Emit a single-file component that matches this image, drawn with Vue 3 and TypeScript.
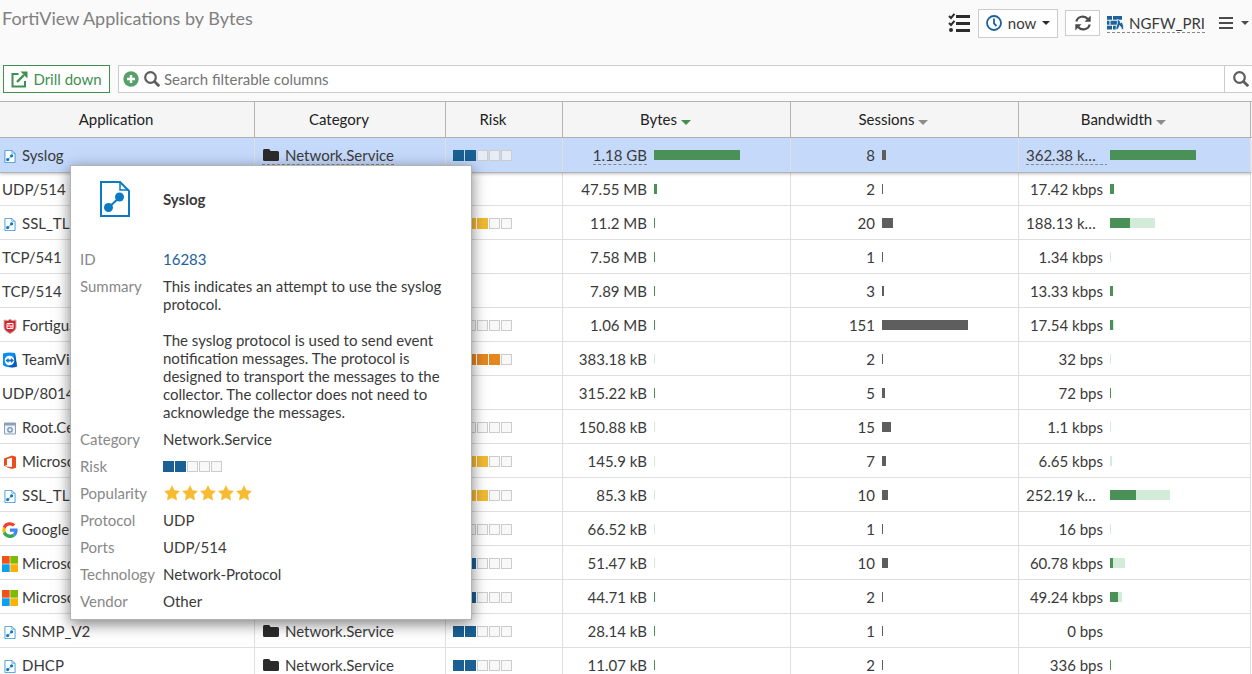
<script setup lang="ts">
import { ref } from 'vue'

type Bar = [strong: number, faint: number]

interface Row {
  icon?: string
  app: string
  category?: string
  risk?: number
  bytes: string
  bytesBar: Bar
  sessions: number
  sessionsBar: number
  bandwidth: string
  bandwidthBar: Bar
}

const rows: Row[] = [
  { icon: 'doc', app: 'Syslog', category: 'Network.Service', risk: 2, bytes: '1.18 GB', bytesBar: [86, 0], sessions: 8, sessionsBar: 4, bandwidth: '362.38 kbps', bandwidthBar: [86, 0] },
  { app: 'UDP/514', bytes: '47.55 MB', bytesBar: [3, 0], sessions: 2, sessionsBar: 1, bandwidth: '17.42 kbps', bandwidthBar: [4, 0] },
  { icon: 'doc', app: 'SSL_TLS', risk: 3, bytes: '11.2 MB', bytesBar: [1, 0], sessions: 20, sessionsBar: 11, bandwidth: '188.13 kbps', bandwidthBar: [20, 25] },
  { app: 'TCP/541', bytes: '7.58 MB', bytesBar: [1, 0], sessions: 1, sessionsBar: 1, bandwidth: '1.34 kbps', bandwidthBar: [0, 1] },
  { app: 'TCP/514', bytes: '7.89 MB', bytesBar: [1, 0], sessions: 3, sessionsBar: 2, bandwidth: '13.33 kbps', bandwidthBar: [3, 0] },
  { icon: 'shield', app: 'Fortiguard', risk: 1, bytes: '1.06 MB', bytesBar: [1, 0], sessions: 151, sessionsBar: 86, bandwidth: '17.54 kbps', bandwidthBar: [3, 1] },
  { icon: 'teamviewer', app: 'TeamViewer', risk: 4, bytes: '383.18 kB', bytesBar: [0, 1], sessions: 2, sessionsBar: 1, bandwidth: '32 bps', bandwidthBar: [0, 1] },
  { app: 'UDP/8014', bytes: '315.22 kB', bytesBar: [1, 0], sessions: 5, sessionsBar: 3, bandwidth: '72 bps', bandwidthBar: [1, 0] },
  { icon: 'window', app: 'Root.Cert', risk: 1, bytes: '150.88 kB', bytesBar: [0, 1], sessions: 15, sessionsBar: 9, bandwidth: '1.1 kbps', bandwidthBar: [0, 1] },
  { icon: 'office', app: 'Microsoft', risk: 3, bytes: '145.9 kB', bytesBar: [0, 1], sessions: 7, sessionsBar: 4, bandwidth: '6.65 kbps', bandwidthBar: [0, 2] },
  { icon: 'doc', app: 'SSL_TLS', risk: 3, bytes: '85.3 kB', bytesBar: [0, 1], sessions: 10, sessionsBar: 6, bandwidth: '252.19 kbps', bandwidthBar: [26, 34] },
  { icon: 'google', app: 'Google', risk: 1, bytes: '66.52 kB', bytesBar: [0, 1], sessions: 1, sessionsBar: 1, bandwidth: '16 bps', bandwidthBar: [0, 1] },
  { icon: 'microsoft', app: 'Microsoft', risk: 2, bytes: '51.47 kB', bytesBar: [0, 1], sessions: 10, sessionsBar: 6, bandwidth: '60.78 kbps', bandwidthBar: [3, 12] },
  { icon: 'microsoft', app: 'Microsoft', risk: 2, bytes: '44.71 kB', bytesBar: [1, 0], sessions: 2, sessionsBar: 1, bandwidth: '49.24 kbps', bandwidthBar: [8, 4] },
  { icon: 'doc', app: 'SNMP_V2', category: 'Network.Service', risk: 2, bytes: '28.14 kB', bytesBar: [1, 0], sessions: 1, sessionsBar: 1, bandwidth: '0 bps', bandwidthBar: [0, 0] },
  { icon: 'doc', app: 'DHCP', category: 'Network.Service', risk: 2, bytes: '11.07 kB', bytesBar: [1, 0], sessions: 2, sessionsBar: 1, bandwidth: '336 bps', bandwidthBar: [1, 0] },
]

const columns = [
  { key: 'app', label: 'Application', arrow: '' },
  { key: 'cat', label: 'Category', arrow: '' },
  { key: 'risk', label: 'Risk', arrow: '' },
  { key: 'num', label: 'Bytes', arrow: 'active' },
  { key: 'num', label: 'Sessions', arrow: 'idle' },
  { key: 'last', label: 'Bandwidth', arrow: 'idle' },
]

const details = [
  { label: 'Protocol', value: 'UDP' },
  { label: 'Ports', value: 'UDP/514' },
  { label: 'Technology', value: 'Network-Protocol' },
  { label: 'Vendor', value: 'Other' },
]

const selected = ref(0)
const search = ref('')
</script>

<template>
  <div class="page">
    <svg class="sprite" aria-hidden="true">
      <symbol id="doc" viewBox="0 0 30 36">
        <path d="M1 1H20L29 10V35H1Z" fill="#fff" stroke="#0b7ac4" stroke-width="2" />
        <path d="M20 1V9H29" fill="none" stroke="#0b7ac4" stroke-width="1.5" />
        <path d="M8 27L20 16" stroke="#0b7ac4" stroke-width="2" />
        <circle cx="8.500" cy="26.500" r="4.500" fill="#0b7ac4" />
        <circle cx="19.500" cy="16" r="4.500" fill="#0b7ac4" />
      </symbol>
      <symbol id="shield" viewBox="0 0 16 16">
        <path d="M8 1L10 2.500L14 2V9C14 12 11 14 8 15.500C5 14 2 12 2 9V2L6 2.500Z" fill="#d9252e" stroke="#b8b8bb" stroke-width="1" />
        <path d="M5 5.500H11V10.500H5Z" fill="none" stroke="#fff" stroke-width="1" />
        <path d="M5 8H11M7 5.500V7M9 8V10" stroke="#fff" stroke-width="1" />
      </symbol>
      <symbol id="teamviewer" viewBox="0 0 16 16">
        <path d="M1 1.500Q7 0 13 1L15 14.500Q9 16 3 14.500L1 13Z" fill="#0b8cf0" />
        <path d="M13 1L15 14.500Q12 16 6 15Q12 12 13 1Z" fill="#0b5bb8" />
        <circle cx="7.500" cy="8.500" r="4.800" fill="#fff" />
        <path d="M3.500 8.500L6.500 6V7.500H9V6L12 8.500L9 11V9.500H6.500V11Z" fill="#0b78d8" />
      </symbol>
      <symbol id="window" viewBox="0 0 16 16">
        <path d="M2.500 3H13.500V14H2.500Z" fill="#edf2f8" stroke="#8ca0bb" stroke-width="1" />
        <path d="M2 3H14V5.500H2Z" fill="#8ca0bb" />
        <circle cx="8" cy="9.800" r="2.200" fill="none" stroke="#7b93b5" stroke-width="1.400" />
      </symbol>
      <symbol id="office" viewBox="0 0 16 16">
        <path d="M2 4.500L10 1.500L14 2.700V13.800L10 15L2 12.200L10 13V3.800L5 5V11L2 12.200Z" fill="#ea4c1d" />
      </symbol>
      <symbol id="google" viewBox="0 0 48 48">
        <path fill="#fbbc05" d="M11 24c0-1.500.3-3 .7-4.400L3.700 13.500A23 23 0 0 0 3.700 34.500l8-6.200A13 13 0 0 1 11 24z" />
        <path fill="#ea4335" d="M24 10.600c3.500 0 6.500 1.200 9 3.200l7-7A24 24 0 0 0 2.600 13.200l8.100 6.200A14 14 0 0 1 24 10.600z" />
        <path fill="#34a853" d="M24 37.400a14 14 0 0 1-13.300-9l-8.100 6.200A24 24 0 0 0 40 42l-7.600-5.900a15 15 0 0 1-8.400 1.300z" />
        <path fill="#4285f4" d="M47 24.500a20 20 0 0 0-.5-4.900H24v9.300h12.800a11 11 0 0 1-4.700 7.200L39.800 42C44.200 38 47 32 47 24.500z" />
      </symbol>
      <symbol id="microsoft" viewBox="0 0 16 16">
        <path d="M0 0H7.700V7.700H0Z" fill="#f1511b" />
        <path d="M8.300 0H16V7.700H8.300Z" fill="#80bb03" />
        <path d="M0 8.300H7.700V16H0Z" fill="#0aa1ee" />
        <path d="M8.300 8.300H16V16H8.300Z" fill="#fbb004" />
      </symbol>
      <symbol id="folder" viewBox="0 0 16 12">
        <path d="M0 1.500Q0 0 1.500 0H5.500Q6.500 0 7 1L7.500 2H14.500Q16 2 16 3.500V10.500Q16 12 14.500 12H1.500Q0 12 0 10.500Z" fill="currentColor" />
      </symbol>
      <symbol id="search" viewBox="0 0 16 16">
        <circle cx="6.500" cy="6.500" r="5.300" fill="none" stroke="currentColor" stroke-width="2.200" />
        <path d="M10.500 10.500L15.200 15.200" stroke="currentColor" stroke-width="2.800" />
      </symbol>
      <symbol id="star" viewBox="0 0 16 16">
        <path d="M8 .8L10.300 5.500L15.400 6.200L11.700 9.800L12.600 15L8 12.500L3.400 15L4.300 9.800L.6 6.200L5.700 5.500Z" fill="#f6bb2f" stroke="#f6bb2f" stroke-width=".6" stroke-linejoin="round" />
      </symbol>
    </svg>

    <header class="top">
      <h1>FortiView Applications by Bytes</h1>
      <div class="actions">
        <button class="plain" aria-label="Checklist">
          <svg width="22" height="20" viewBox="0 0 22 20">
            <path d="M8 3.500H22M8 10.500H22M8 17.500H22" stroke="#2b2b2b" stroke-width="3" />
            <path d="M1 3L3 5L6.500 .8M1 10L3 12L6.500 7.800" fill="none" stroke="#2b2b2b" stroke-width="2" />
            <circle cx="3" cy="17" r="2" fill="#2b2b2b" />
          </svg>
        </button>
        <button class="box now">
          <svg width="16" height="16" viewBox="0 0 16 16">
            <circle cx="8" cy="8" r="7" fill="none" stroke="#1d629b" stroke-width="1.800" />
            <path d="M8 3.500V8.500L10.500 11" fill="none" stroke="#1d629b" stroke-width="1.800" />
          </svg>
          <span>now</span>
          <i class="caret dark"></i>
        </button>
        <button class="box refresh" aria-label="Refresh">
          <svg width="16" height="16" viewBox="0 0 16 16">
            <path d="M1.300 6.500A6.600 6.600 0 0 1 12.800 4M14.700 9.500A6.600 6.600 0 0 1 3.200 12" fill="none" stroke="#4b4b4b" stroke-width="2.200" />
            <path d="M15.700 .5V6.700H9.500ZM.3 15.500V9.300H6.500Z" fill="#4b4b4b" />
          </svg>
        </button>
        <a class="device dashed" href="#">
          <svg width="17" height="14" viewBox="0 0 17 14">
            <path d="M0 0H5V3.700H0ZM6 0H15V3.700H6ZM0 4.700H2.500V8.700H0ZM3.500 4.700H10V8.700H3.500ZM0 9.700H5V13.500H0ZM6 9.700H9V13.500H6Z" fill="#1d629b" />
            <path d="M10 3.500C13 4 13.500 5.500 13.500 7L14.800 6C16 8 16.800 9.500 16.500 13.500H14.500C14.800 11.500 13.500 10.500 12.500 9.500C12.500 11 11 12 11 13.500H9C8.500 10 11.500 8 10 3.500Z" fill="#1d629b" stroke="#fafafa" stroke-width=".7" />
          </svg>
          <span>NGFW_PRI</span>
        </a>
        <button class="plain menu" aria-label="Menu">
          <svg width="14" height="12" viewBox="0 0 14 12">
            <path d="M0 1H14M0 6H14M0 11H14" stroke="#4b4b4b" stroke-width="2" />
          </svg>
          <i class="caret"></i>
        </button>
      </div>
    </header>

    <div class="toolbar">
      <button class="drill">
        <svg width="17" height="17" viewBox="0 0 17 17">
          <path d="M7.500 3H1.500V15.500H14V10" fill="none" stroke="#3f8f51" stroke-width="2" />
          <path d="M6 11L13 4" stroke="#3f8f51" stroke-width="2.400" />
          <path d="M9.500 .5H16.500V7.500Z" fill="#3f8f51" />
        </svg>
        <span>Drill down</span>
      </button>
      <div class="search">
        <button class="plain" aria-label="Add filter">
          <svg width="16" height="16" viewBox="0 0 16 16">
            <circle cx="8" cy="8" r="7.700" fill="#57a068" />
            <path d="M8 4V12M4 8H12" stroke="#fff" stroke-width="2.400" />
          </svg>
        </button>
        <svg class="mag" width="16" height="16"><use href="#search" /></svg>
        <input v-model="search" type="text" aria-label="Search filterable columns" placeholder="Search filterable columns" />
        <button class="go" aria-label="Search">
          <svg width="16" height="16"><use href="#search" /></svg>
        </button>
      </div>
    </div>

    <main class="grid">
      <table>
        <colgroup>
          <col v-for="c in columns" :key="c.label" :class="'w-' + c.key" />
        </colgroup>
        <thead>
          <tr>
            <th v-for="c in columns" :key="c.label" scope="col">
              {{ c.label }}<i v-if="c.arrow" class="sort" :class="c.arrow"></i>
            </th>
          </tr>
        </thead>
        <tbody>
          <tr v-for="(r, i) in rows" :key="i" :class="{ selected: i === selected }" @click="selected = i">
            <td class="app">
              <div class="cell">
                <svg v-if="r.icon" class="app-icon" :class="r.icon"><use :href="'#' + r.icon" /></svg>
                <span>{{ r.app }}</span>
              </div>
            </td>
            <td>
              <div v-if="r.category" class="cell">
                <span class="category" :class="{ dashed: i === selected }">
                  <svg width="18" height="12"><use href="#folder" /></svg>{{ r.category }}
                </span>
              </div>
            </td>
            <td>
              <div v-if="r.risk" class="cell">
                <div class="risk" :class="'level-' + r.risk">
                  <i v-for="n in 5" :key="n" :class="{ on: n <= r.risk }"></i>
                </div>
              </div>
            </td>
            <td>
              <div class="cell">
                <div class="value"><span :class="{ dashed: i === selected }">{{ r.bytes }}</span></div>
                <i class="bar" :style="{ width: r.bytesBar[0] + 'px' }"></i>
                <i class="bar faint" :style="{ width: r.bytesBar[1] + 'px' }"></i>
              </div>
            </td>
            <td>
              <div class="cell">
                <div class="value">{{ r.sessions }}</div>
                <i class="bar grey" :style="{ width: r.sessionsBar + 'px' }"></i>
              </div>
            </td>
            <td>
              <div class="cell">
                <div class="value"><span :class="{ dashed: i === selected }">{{ r.bandwidth }}</span></div>
                <i class="bar" :style="{ width: r.bandwidthBar[0] + 'px' }"></i>
                <i class="bar faint" :style="{ width: r.bandwidthBar[1] + 'px' }"></i>
              </div>
            </td>
          </tr>
        </tbody>
      </table>

      <aside class="popup" role="tooltip">
        <div class="popup-head">
          <svg width="30" height="36"><use href="#doc" /></svg>
          <strong>Syslog</strong>
        </div>
        <dl>
          <dt>ID</dt>
          <dd><a href="#">16283</a></dd>
          <dt>Summary</dt>
          <dd>
            <p>This indicates an attempt to use the syslog protocol.</p>
            <p>The syslog protocol is used to send event notification messages. The protocol is designed to transport the messages to the collector. The collector does not need to acknowledge the messages.</p>
          </dd>
          <dt>Category</dt>
          <dd>Network.Service</dd>
          <dt>Risk</dt>
          <dd class="middle">
            <div class="risk level-2"><i v-for="n in 5" :key="n" :class="{ on: n <= 2 }"></i></div>
          </dd>
          <dt>Popularity</dt>
          <dd class="middle stars">
            <svg v-for="n in 5" :key="n" width="16" height="16"><use href="#star" /></svg>
          </dd>
          <template v-for="d in details" :key="d.label">
            <dt>{{ d.label }}</dt>
            <dd>{{ d.value }}</dd>
          </template>
        </dl>
      </aside>
    </main>
  </div>
</template>

<style>
body {
  background: #fafafa;
}
</style>

<style scoped>
.page {
  height: 100vh;
  overflow: hidden;
  display: flex;
  flex-direction: column;
  font-family: Lato, "Liberation Sans", sans-serif;
  font-size: 15px;
  line-height: 18px;
  color: #3a3a3a;
}
.page *,
.page *::before {
  box-sizing: border-box;
}
svg {
  display: block;
  flex: none;
}
.sprite {
  position: absolute;
  width: 0;
  height: 0;
}
button,
input {
  font: inherit;
  color: inherit;
  margin: 0;
  padding: 0;
  border: 0;
  border-radius: 0;
  background: none;
}
button {
  cursor: pointer;
}
.top {
  display: flex;
  justify-content: space-between;
  align-items: flex-start;
  height: 65px;
  padding: 8px 3px 0 2px;
}
h1 {
  margin: 0;
  font-size: 18px;
  line-height: 20px;
  font-weight: 400;
  color: #808080;
}
.actions {
  display: flex;
  align-items: center;
  height: 30px;
}
.box {
  display: flex;
  align-items: center;
  justify-content: center;
  background: #fff;
  border: 1px solid #ccc;
}
.now {
  width: 80px;
  height: 29px;
  gap: 6px;
  margin: 0 7px 0 8px;
}
.refresh {
  width: 35px;
  height: 26px;
  margin-right: 7px;
}
.caret {
  border: 4px solid transparent;
  border-top-color: #4b4b4b;
  border-bottom: 0;
}
.caret.dark {
  border-top-color: #2b2b2b;
}
.device {
  display: flex;
  align-items: center;
  gap: 5px;
  color: inherit;
  text-decoration: none;
}
.menu {
  display: flex;
  align-items: center;
  gap: 8px;
  margin-left: 14px;
}
.dashed {
  border-bottom: 1px dashed #888;
}
.toolbar {
  display: flex;
  gap: 8px;
  height: 36px;
  padding-left: 3px;
}
.drill {
  display: flex;
  align-items: center;
  justify-content: center;
  gap: 5px;
  width: 107px;
  height: 28px;
  background: #fff;
  border: 1px solid #3f8f51;
  color: #3f8f51;
}
.search {
  flex: 1;
  display: flex;
  align-items: center;
  height: 28px;
  padding-left: 4px;
  background: #fff;
  border: 1px solid #ccc;
  border-right: 0;
  color: #5e5e5e;
}
.mag {
  margin: 0 4px 0 5px;
}
.search input {
  flex: 1;
  min-width: 0;
  outline: none;
}
.search input::placeholder {
  color: #757575;
  opacity: 1;
}
.go {
  align-self: stretch;
  width: 28px;
  padding-left: 8px;
  border-left: 1px solid #ccc;
}
.grid {
  position: relative;
  flex: 1;
  min-height: 0;
  padding-right: 1px;
  background: linear-gradient(#b3b3b3 1px, #f5f5f5 1px, #f5f5f5 36px, #b3b3b3 36px, #b3b3b3 37px, #fff 37px);
}
table {
  width: 100%;
  table-layout: fixed;
  border-collapse: separate;
  border-spacing: 0;
}
.w-app {
  width: 255px;
}
.w-cat {
  width: 191px;
}
.w-risk {
  width: 117px;
}
.w-num {
  width: 228px;
}
th {
  height: 37px;
  padding: 0 22px 2px 0;
  font-weight: 400;
  color: #222;
  background: #f5f5f5;
  border: solid #b3b3b3;
  border-width: 1px 1px 1px 0;
}
.sort {
  display: inline-block;
  margin-left: 4px;
  border: 5px solid transparent;
  border-bottom: 0;
}
.sort.active {
  border-top-color: #3f8f51;
}
.sort.idle {
  border-top-color: #8c8c8c;
}
td {
  height: 34px;
  padding: 0 0 0 7px;
  background: #fff;
  border: solid #dfdfdf;
  border-width: 0 1px 1px 0;
}
td.app {
  padding-left: 2px;
}
.selected td {
  background: #c5d9fb;
  border-bottom-color: #c5d9fb;
}
.selected {
  position: relative;
  box-shadow: 0 1px 0 #b3b3b3, 0 2px 3px rgba(0, 0, 0, 0.25);
}
.cell {
  display: flex;
  align-items: center;
  height: 18px;
  white-space: nowrap;
}
.app-icon {
  width: 16px;
  height: 16px;
  margin: 2px 4px 0 0;
}
.app-icon.doc {
  height: 13px;
  margin-top: 3px;
}
.category {
  display: flex;
  align-items: center;
  gap: 5px;
}
.category svg {
  color: #2b2b2b;
}
.category.dashed {
  margin-bottom: -1px;
}
.value {
  width: 81px;
  margin: 0 3px -2px 0;
  padding: 0 4px 2px 0;
  overflow: hidden;
  text-overflow: ellipsis;
  text-align: right;
}
.bar {
  height: 10px;
  background: #4a9158;
}
.bar.faint {
  background: #d3ecd9;
}
.bar.grey {
  background: #5e5e5e;
}
.risk {
  display: flex;
  gap: 1px;
}
.cell .risk {
  margin-top: 1px;
}
.risk i {
  width: 11px;
  height: 11px;
  border: 1px solid #ccc;
  background: rgba(245, 245, 245, 0.7);
}
.risk i.on {
  border: 0;
  background: #1a6094;
}
.level-1 i.on {
  background: #4a9158;
}
.level-3 i.on {
  background: #f3ba2f;
}
.level-4 i.on {
  background: #e5861f;
}
.popup {
  position: absolute;
  left: 70px;
  top: 64px;
  width: 402px;
  padding: 15px 24px 9px 9px;
  background: #fff;
  border: 1px solid #b3b3b3;
  box-shadow: 0 4px 14px rgba(0, 0, 0, 0.5);
}
.popup-head {
  display: flex;
  align-items: center;
  gap: 33px;
  padding-left: 20px;
  height: 36px;
}
.popup dl {
  display: grid;
  grid-template-columns: 83px 1fr;
  row-gap: 9px;
  margin: 33px 0 0;
}
.popup dt {
  color: #888;
}
.popup dd {
  margin: 0;
}
.popup dd.middle {
  display: flex;
  align-items: center;
}
.popup dd.stars {
  gap: 2px;
  padding-left: 1px;
}
.popup dd a {
  color: #1d629b;
  text-decoration: none;
}
.popup p {
  margin: 0;
}
.popup p + p {
  margin-top: 18px;
}
</style>
